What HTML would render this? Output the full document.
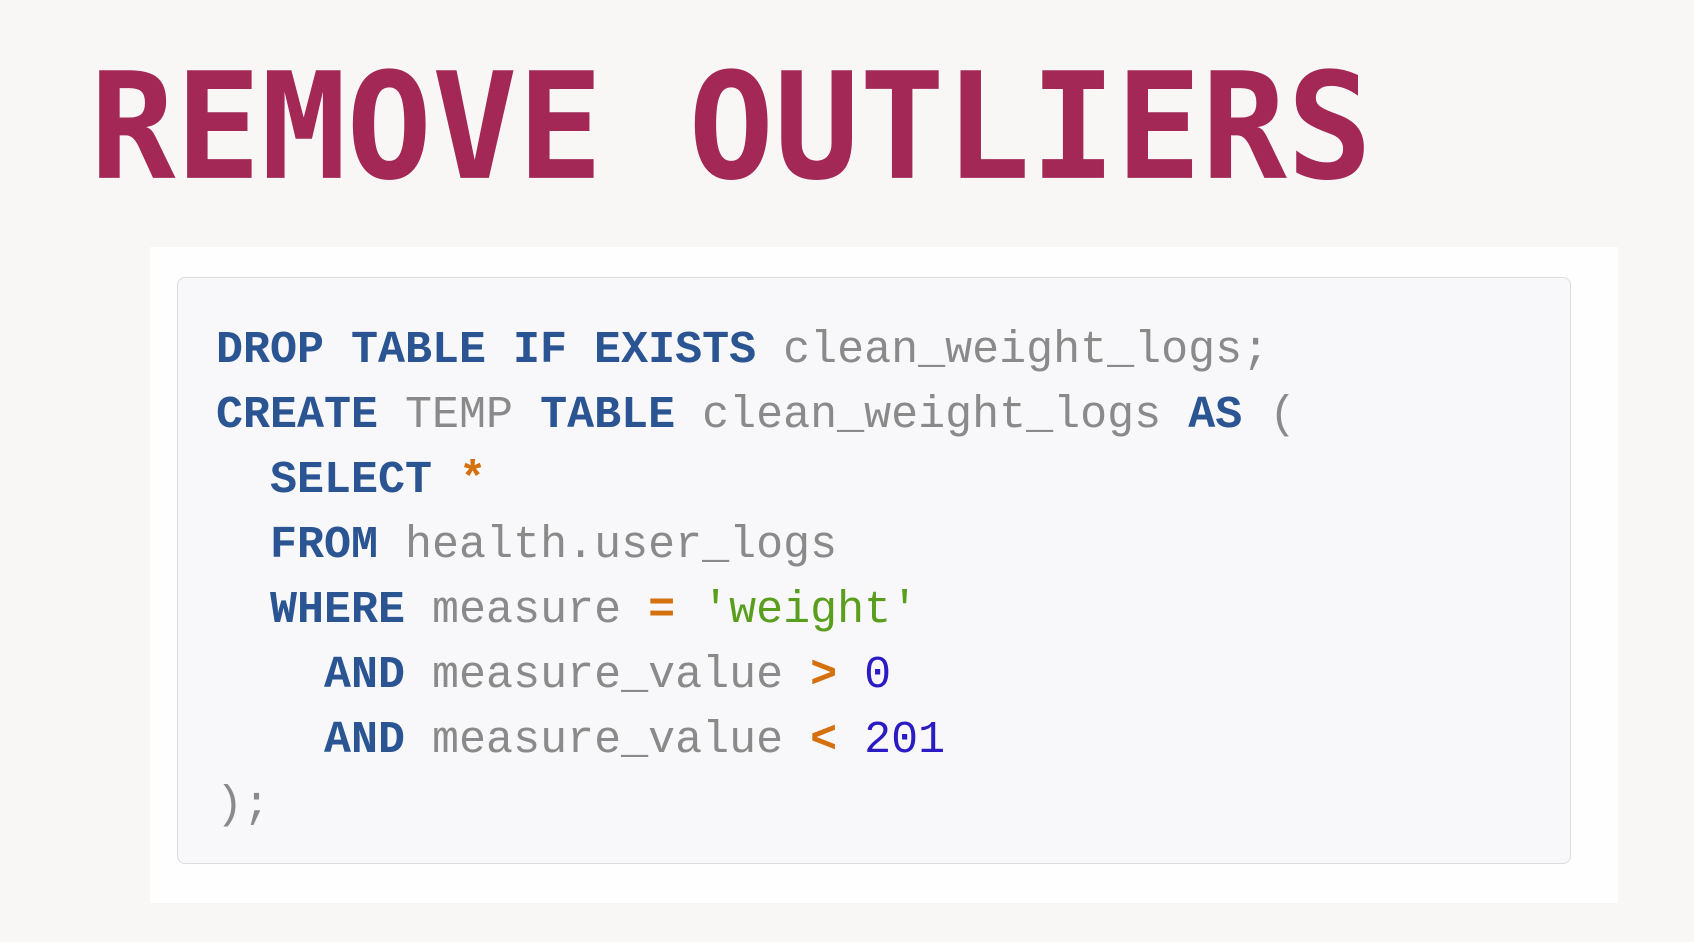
<!DOCTYPE html>
<html><head><meta charset="utf-8"><style>
html,body{margin:0;padding:0}
body{width:1694px;height:942px;background:#f8f7f6;position:relative;overflow:hidden}
.title{position:absolute;left:90px;top:50px;font-family:"DejaVu Sans Mono","Liberation Mono",monospace;font-weight:bold;font-size:142px;line-height:150px;color:#a32856;letter-spacing:0;transform:scaleY(1.04);transform-origin:0 0;white-space:pre}
.panel{position:absolute;left:150px;top:247px;width:1468px;height:656px;background:#fefefe}
.box{position:absolute;left:177px;top:277px;width:1394px;height:587px;background:#f8f8fa;border:1.5px solid #dcdcde;border-radius:8px;box-sizing:border-box}
.code{position:absolute;left:216px;top:318px;margin:0;font-family:"Liberation Mono",monospace;font-size:45px;line-height:65px;color:#8a8a8a;white-space:pre}
.k{color:#2a5592;font-weight:bold}
.o{color:#d4700e;font-weight:bold}
.s{color:#5a9e1e}
.n{color:#2a1cc2}
</style></head><body>
<div class="title">REMOVE OUTLIERS</div>
<div class="panel"></div>
<div class="box"></div>
<pre class="code"><span class="k">DROP TABLE IF EXISTS</span> clean_weight_logs;
<span class="k">CREATE</span> TEMP <span class="k">TABLE</span> clean_weight_logs <span class="k">AS</span> (
  <span class="k">SELECT</span> <span class="o">*</span>
  <span class="k">FROM</span> health.user_logs
  <span class="k">WHERE</span> measure <span class="o">=</span> <span class="s">'weight'</span>
    <span class="k">AND</span> measure_value <span class="o">&gt;</span> <span class="n">0</span>
    <span class="k">AND</span> measure_value <span class="o">&lt;</span> <span class="n">201</span>
);</pre>
</body></html>
